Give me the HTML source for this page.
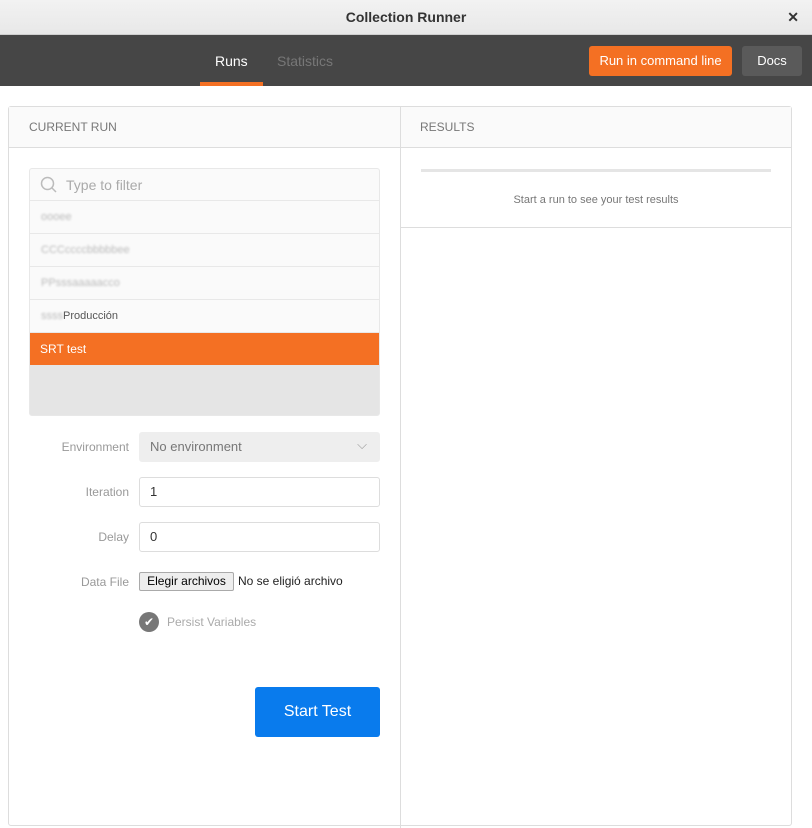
<!DOCTYPE html>
<html><head><meta charset="utf-8"><style>
*{box-sizing:border-box;margin:0;padding:0}
body{width:812px;height:785px;overflow:hidden;background:#fff;font-family:"Liberation Sans",sans-serif;position:relative}
.abs{position:absolute}
.title{left:0;top:0;width:812px;height:35px;background:linear-gradient(#f2f2f2,#e8e8e8);border-bottom:1px solid #cfcfcf;text-align:center;font-weight:bold;font-size:14px;line-height:35px;color:#333}
.bar{left:0;top:35px;width:812px;height:51px;background:#464646}
.main{left:8px;top:106px;width:784px;height:720px;border:1px solid #ddd;border-radius:3px}
.hdr{height:41px;border-bottom:1px solid #ddd;background:#fafafa;font-size:12px;color:#777;line-height:41px}
.lbl{font-size:12px;color:#999;text-align:right;width:120px;left:9px}
.inp{left:139px;width:241px;height:30px;border:1px solid #ddd;border-radius:3px;font-size:13px;color:#333;line-height:28px;padding-left:10px}
.row{height:33px;border-bottom:1px solid #e8e8e8;font-size:11px;line-height:33px;padding-left:11px;color:#bbb}
.bl{filter:blur(1px);display:inline-block}
</style></head><body>
<div class="abs title">Collection Runner</div>
<div class="abs" style="right:13px;top:9px;font-size:14px;font-weight:bold;color:#333">✕</div>
<div class="abs bar">
 <div class="abs" style="left:215px;top:18px;color:#fff;font-size:14px">Runs</div>
 <div class="abs" style="left:200px;top:47px;width:63px;height:4px;background:#f47023"></div>
 <div class="abs" style="left:277px;top:18px;color:#777;font-size:14px">Statistics</div>
 <div class="abs" style="left:589px;top:11px;width:143px;height:30px;background:#f47023;border-radius:3px;color:#fff;font-size:13px;text-align:center;line-height:30px">Run in command line</div>
 <div class="abs" style="left:742px;top:11px;width:60px;height:30px;background:#5a5a5a;border-radius:3px;color:#fff;font-size:13px;text-align:center;line-height:30px">Docs</div>
</div>
<div class="abs main">
 <div class="abs hdr" style="left:0;top:0;width:392px;padding-left:20px;border-right:1px solid #ddd">CURRENT RUN</div>
 <div class="abs hdr" style="left:392px;top:0;width:390px;padding-left:19px">RESULTS</div>
 <div class="abs" style="left:391px;top:41px;width:1px;height:680px;background:#ddd"></div>
 <div class="abs" style="left:412px;top:62px;width:350px;height:3px;background:#e5e5e5"></div>
 <div class="abs" style="left:392px;top:87px;width:390px;text-align:center;font-size:11px;color:#777">Start a run to see your test results</div>
 <div class="abs" style="left:392px;top:120px;width:390px;height:1px;background:#ddd"></div>
</div>
<div class="abs" style="left:29px;top:168px;width:351px;height:248px;border:1px solid #e8e8e8;border-radius:3px;background:#e5e5e5;overflow:hidden">
 <div style="background:#fafafa">
 <div class="row" style="height:32px;line-height:32px;font-size:14px;color:#aaa;padding-left:36px;position:relative"><svg class="abs" style="left:10px;top:7px" width="18" height="18" viewBox="0 0 18 18"><circle cx="7.5" cy="7.5" r="6" fill="none" stroke="#bbb" stroke-width="1.5"/><path d="M12 12l4 4" stroke="#bbb" stroke-width="1.5"/></svg>Type to filter</div>
 <div class="row"><span class="bl">oooee</span></div>
 <div class="row"><span class="bl">CCCccccbbbbbee</span></div>
 <div class="row"><span class="bl">PPsssaaaaacco</span></div>
 <div class="row" style="color:#555"><span class="bl" style="color:#bbb">ssss</span>Producción</div>
 </div>
 <div style="height:32px;background:#f47023;color:#fff;font-size:12px;line-height:32px;padding-left:10px">SRT test</div>
</div>
<div class="abs lbl" style="top:440px">Environment</div>
<div class="abs inp" style="top:432px;background:#eee;border-color:#eee;color:#777">No environment<span class="abs" style="right:12px;top:-2px;color:#999">⌵</span></div>
<div class="abs lbl" style="top:485px">Iteration</div>
<div class="abs inp" style="top:477px">1</div>
<div class="abs lbl" style="top:530px">Delay</div>
<div class="abs inp" style="top:522px">0</div>
<div class="abs lbl" style="top:575px">Data File</div>
<div class="abs" style="left:139px;top:572px;width:95px;height:19px;border:1px solid #aaa;border-radius:2px;background:#eee;font-size:12px;text-align:center;line-height:17px;color:#000">Elegir archivos</div>
<div class="abs" style="left:238px;top:574px;font-size:12px;color:#222">No se eligió archivo</div>
<div class="abs" style="left:139px;top:612px;width:20px;height:20px;border-radius:50%;background:#777;color:#fff;font-size:12px;text-align:center;line-height:20px">✔</div>
<div class="abs" style="left:167px;top:615px;font-size:12px;color:#aaa">Persist Variables</div>
<div class="abs" style="left:255px;top:687px;width:125px;height:50px;background:#097bed;border-radius:3px;color:#fff;font-size:16px;text-align:center;line-height:50px">Start Test</div>
</body></html>
